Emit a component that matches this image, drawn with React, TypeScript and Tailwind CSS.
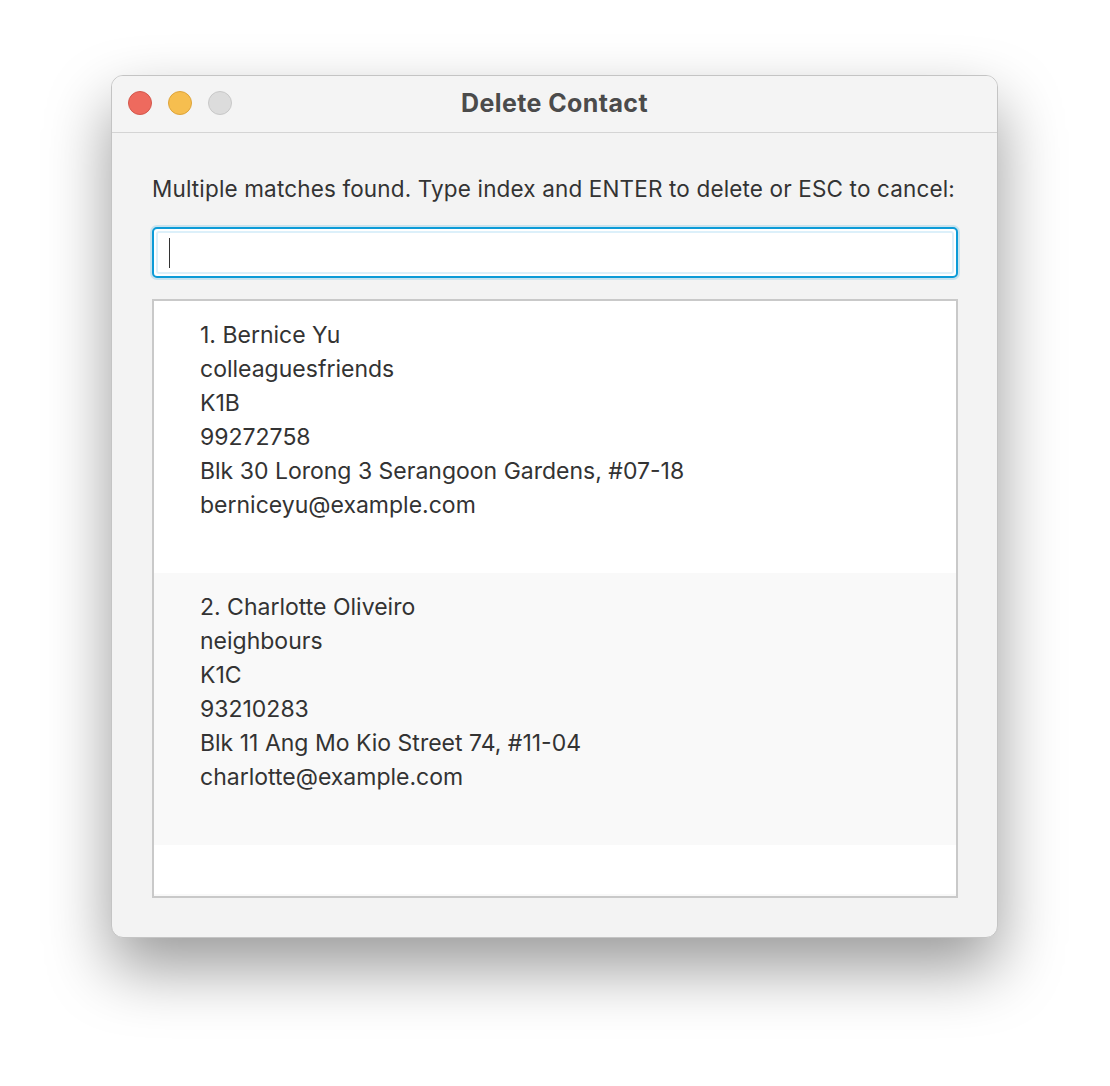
import React from "react";

const contacts = [
  {
    lines: [
      "1. Bernice Yu",
      "colleaguesfriends",
      "K1B",
      "99272758",
      "Blk 30 Lorong 3 Serangoon Gardens, #07-18",
      "berniceyu@example.com",
    ],
  },
  {
    lines: [
      "2. Charlotte Oliveiro",
      "neighbours",
      "K1C",
      "93210283",
      "Blk 11 Ang Mo Kio Street 74, #11-04",
      "charlotte@example.com",
    ],
  },
];

export default function App() {
  return (
    <div
      className="w-[1110px] h-[1086px] bg-white pt-[75px] pl-[111px]"
      style={{ fontFamily: "Inter, 'Noto Sans', sans-serif" }}
    >
      <div className="w-[887px] h-[863px] rounded-[12px] bg-[#f3f3f3] border border-[#c4c4c4] shadow-[0_30px_64px_rgba(0,0,0,0.40)] flex flex-col overflow-hidden">
        {/* Title bar */}
        <div className="relative h-[57px] shrink-0 flex items-center justify-center border-b border-[#d4d4d4] bg-[#f4f4f4]">
          <div className="absolute left-[16px] top-[15px] flex gap-[16px]">
            <span className="w-[24px] h-[24px] rounded-full bg-[#ee6a5e] border border-[#d4574c]" />
            <span className="w-[24px] h-[24px] rounded-full bg-[#f6be4f] border border-[#dea43a]" />
            <span className="w-[24px] h-[24px] rounded-full bg-[#dcdcdc] border border-[#c8c8c8]" />
          </div>
          <span className="text-[25px] leading-[30px] font-bold text-[#4b4b4b] tracking-[0.4px] -mt-[2px]">Delete Contact</span>
        </div>

        {/* Body */}
        <div className="flex flex-col px-[40px] pt-[43px]">
          <p className="text-[22.5px] leading-[26px] text-[#333333] tracking-[0.15px] whitespace-nowrap">
            Multiple matches found. Type index and ENTER to delete or ESC to cancel:
          </p>

          <div className="mt-[25px] h-[51px] w-[806px] rounded-[5px] border-2 border-[#0c9bd7] bg-white shadow-[0_0_0_2px_rgba(12,155,215,0.18)] p-[2px]">
            <div className="h-full w-full rounded-[3px] border-2 border-[#dcf0fa] flex items-center pl-[11px]">
              <span className="w-[1px] h-[30px] bg-[#333]" />
            </div>
          </div>

          <div className="mt-[21px] w-[806px] h-[599px] border-2 border-[#c9c9c9] bg-white flex flex-col overflow-hidden">
            {contacts.map((c, i) => (
              <div
                key={i}
                className={`h-[272px] shrink-0 pl-[46px] pt-[17px] ${i % 2 === 0 ? "bg-white" : "bg-[#f9f9f9]"}`}
              >
                {c.lines.map((l, j) => (
                  <div key={j} className="text-[23px] leading-[34px] text-[#333333]">
                    {l}
                  </div>
                ))}
              </div>
            ))}
            <div className="h-[49px] shrink-0 bg-white" />
            <div className="flex-1 bg-[#f9f9f9]" />
          </div>
        </div>
      </div>
    </div>
  );
}
